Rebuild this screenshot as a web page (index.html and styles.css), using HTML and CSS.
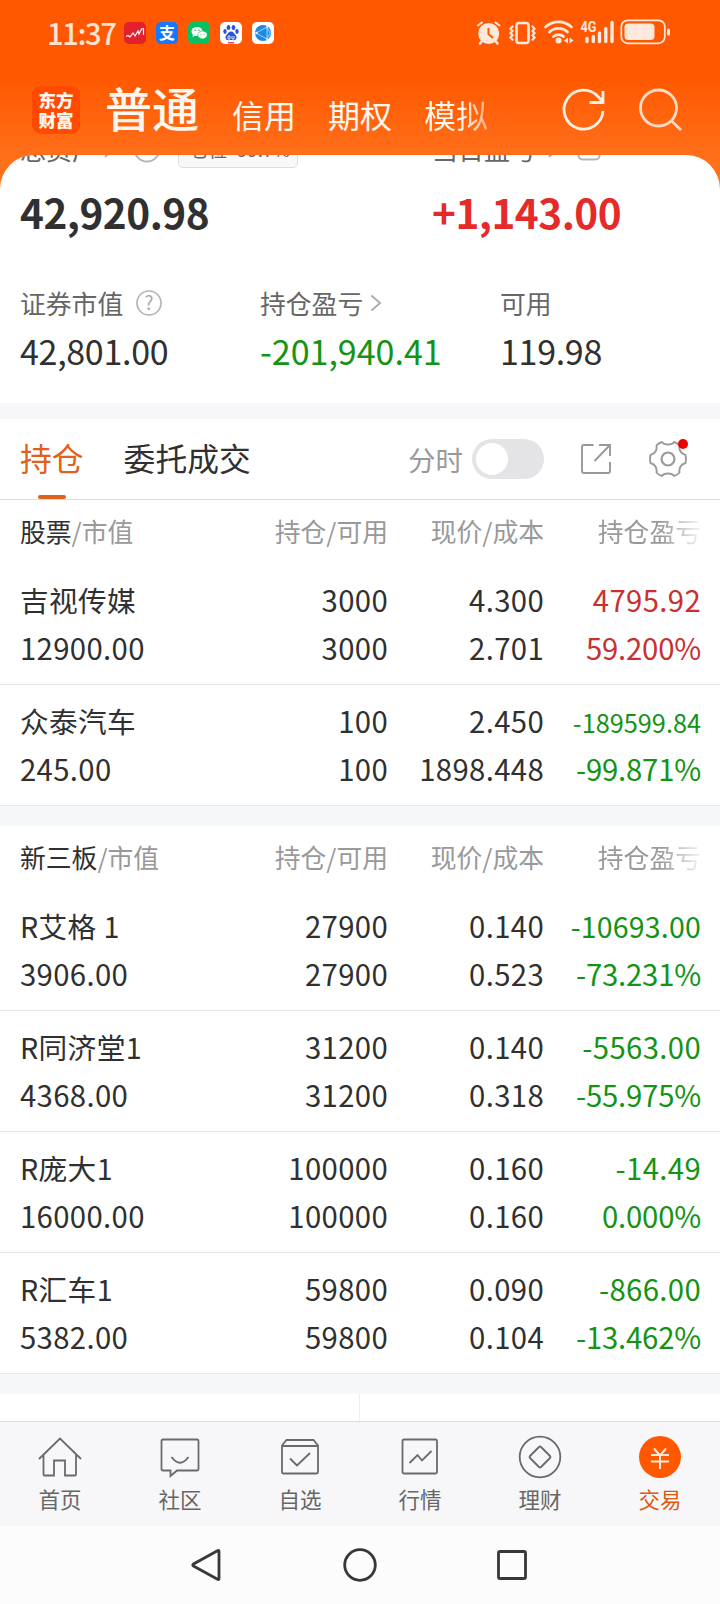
FILE: index.html
```html
<!DOCTYPE html>
<html lang="zh-CN">
<head>
    <meta charset="UTF-8">
    <title>交易</title>
    <link rel="stylesheet" href="styles.css">
</head>
<body>
    <header class="header">
        <div class="status-bar">
            <span class="time">11:37</span>
            <div class="apps">
                <svg width="22" height="22" viewBox="0 0 22 22"><rect width="22" height="22" rx="5" fill="#e3202c"/><path d="M2 14.500l2-1 2 1.500 3-4 2 3 3-5 1 3 2.500-5 2-.5v6.500" fill="none" stroke="#fff" stroke-width="1.200"/></svg>
                <svg width="22" height="22" viewBox="0 0 22 22"><rect width="22" height="22" rx="5" fill="#1677ff"/><text x="11" y="17" text-anchor="middle" class="zhi">支</text></svg>
                <svg width="22" height="22" viewBox="0 0 22 22"><rect width="22" height="22" rx="5" fill="#07c160"/><ellipse cx="9" cy="9.500" rx="5.500" ry="4.600" fill="#fff"/><path d="M5 12l-.5 3 3-1.500z" fill="#fff"/><ellipse cx="14.500" cy="13" rx="4.700" ry="3.900" fill="#fff" stroke="#07c160" stroke-width=".6"/><g fill="#07c160"><circle cx="7.200" cy="8.300" r=".8"/><circle cx="11" cy="8.300" r=".8"/><circle cx="13" cy="12" r=".6"/><circle cx="16" cy="12" r=".6"/></g></svg>
                <svg width="22" height="22" viewBox="0 0 22 22"><rect width="22" height="22" rx="5" fill="#fff"/><g fill="#2a55d8"><ellipse cx="8.500" cy="5.500" rx="1.900" ry="2.600"/><ellipse cx="13.500" cy="5.500" rx="1.900" ry="2.600"/><ellipse cx="5" cy="9.500" rx="1.700" ry="2.400"/><ellipse cx="17" cy="9.500" rx="1.700" ry="2.400"/><path d="M11 9.500c2.500 0 3 2 4.500 3.500 2 2 1 5.500-2 5.200-1.500-.2-3.500-.2-5 0-3 .3-4-3.200-2-5.200C8 11.500 8.500 9.500 11 9.500z"/></g><path d="M8 14h2v3H8zM12 14v3h2v-3" fill="none" stroke="#fff" stroke-width=".8"/><path d="M8 20.800h6" stroke="#d93a5c" stroke-width="1.400"/></svg>
                <svg width="22" height="22" viewBox="0 0 22 22"><rect width="22" height="22" rx="5" fill="#fff"/><circle cx="11" cy="11" r="8" fill="#1e88e5"/><path d="M4 11l11-6 3 6-3 6zM15 5v12" fill="none" stroke="#8fdcff" stroke-width="1"/><g fill="#d8f4ff"><circle cx="4.500" cy="11" r="1.300"/><circle cx="15" cy="5" r="1"/><circle cx="15" cy="17" r="1"/></g></svg>
            </div>
            <svg class="signals" width="194" height="28" viewBox="476 19 194 28">
                <g fill="none" stroke="#ffe9dd" stroke-linecap="round">
                    <path d="M478 25.500l4-3M499.500 25.500l-4-3" stroke-width="2"/>
                    <path d="M482 41l-2 2.500M495.500 41l2 2.500" stroke-width="2.600"/>
                    <rect x="516.500" y="23" width="12" height="20" rx="2.500" stroke-width="2.600"/>
                    <path d="M512.500 26.500l-2 2.200 2 2.200-2 2.200 2 2.200-2 2.200 2 2.200M532.500 26.500l2 2.200-2 2.200 2 2.200-2 2.200 2 2.200-2 2.200" stroke-width="2.200"/>
                    <path d="M545.500 27a19 19 0 0 1 26 0M549.500 32a13 13 0 0 1 18 0M553.500 36.500a7.500 7.500 0 0 1 10 0" stroke-width="2.700"/>
                    <path d="M587 38.500v3M593.300 36.500v5M599.500 33v8.500M605.800 28.500v13M612 22.500v19" stroke-width="3.400"/>
                    <rect x="621.300" y="20.300" width="43.500" height="23" rx="6.500" stroke-width="1.700"/>
                    <path d="M668.500 30v4" stroke-width="3"/>
                </g>
                <g fill="#ffe9dd">
                    <circle cx="488.700" cy="33.500" r="10.500"/>
                    <circle cx="558.500" cy="40.500" r="3"/>
                    <path d="M568 37.500v6l-4-3zM569.500 37.500v6l4-3z"/>
                    <rect x="624.500" y="23.500" width="30" height="16.600" rx="4"/>
                    <text x="580.500" y="32" textLength="16" lengthAdjust="spacingAndGlyphs" class="net">4G</text>
                </g>
                <path d="M488.500 28v6l4.500 4" fill="none" stroke="#ff5800" stroke-width="2"/>
            </svg>
        </div>
        <nav class="top-nav">
            <div class="logo">东方<br>财富</div>
            <span class="nav-item current">普通</span>
            <span class="nav-item">信用</span>
            <span class="nav-item">期权</span>
            <span class="nav-item fade">模拟</span>
            <svg class="refresh" width="44" height="44" viewBox="0 0 44 44" fill="none" stroke="#fff0e6" stroke-width="2.800"><path d="M41 23a19.500 19.500 0 1 1-5-14.500l4 4.500M41 3v11.500H27.500"/></svg>
            <svg class="search" width="44" height="44" viewBox="0 0 44 44" fill="none" stroke="#ffdcc4" stroke-width="2.800"><circle cx="20.500" cy="20" r="18"/><path d="M33 32.500l10 9.500"/></svg>
        </nav>
    </header>

    <main class="panel">
        <section class="assets">
            <div class="asset-head">
                <div class="asset-total">
                    <span>总资产</span>
                    <svg class="chevron" width="10" height="18" viewBox="0 0 10 18"><path d="M1 1l8 8-8 8"/></svg>
                    <svg class="ring" width="28" height="28" viewBox="0 0 28 28"><circle cx="14" cy="14" r="12.500"/></svg>
                    <span class="badge">仓位 99.7%</span>
                </div>
                <div class="asset-day">
                    <span>当日盈亏</span>
                    <svg class="chevron" width="10" height="18" viewBox="0 0 10 18"><path d="M1 1l8 8-8 8"/></svg>
                    <svg class="ring" width="24" height="24" viewBox="0 0 24 24"><rect x="1.500" y="1.500" width="21" height="21" rx="4"/></svg>
                </div>
            </div>
            <div class="asset-big">
                <div>42,920.98</div>
                <div class="red">+1,143.00</div>
            </div>
            <div class="asset-list">
                <div>
                    <div class="label">证券市值 <svg class="help" width="26" height="26" viewBox="0 0 26 26"><circle cx="13" cy="13" r="12" fill="none" stroke="#b5b5b5" stroke-width="1.700"/><text x="13" y="19.500" text-anchor="middle">?</text></svg></div>
                    <div class="value">42,801.00</div>
                </div>
                <div>
                    <div class="label">持仓盈亏 <svg class="chevron" width="12" height="18" viewBox="0 0 12 18"><path d="M1.500 1.500l8.500 7.500-8.500 7.500"/></svg></div>
                    <div class="value green">-201,940.41</div>
                </div>
                <div>
                    <div class="label">可用</div>
                    <div class="value">119.98</div>
                </div>
            </div>
        </section>

        <div class="tabs">
            <span class="tab active">持仓</span>
            <span class="tab">委托成交</span>
            <span class="switch-label">分时</span>
            <span class="switch"></span>
            <svg class="share" width="32" height="32" viewBox="0 0 32 32" fill="none" stroke="#999" stroke-width="1.900"><path d="M13.500 2H4a2 2 0 0 0-2 2v24a2 2 0 0 0 2 2h24a2 2 0 0 0 2-2V19M19 2h11v11M29.500 2.500l-15 15.500"/></svg>
            <span class="setting">
                <svg width="38" height="38" viewBox="-19 -19 38 38" fill="none" stroke="#999" stroke-width="1.900" stroke-linejoin="round"><path d="M-6-17Q-4.500-14.500 0-14.500T6-17Q9.500-16 11.500-13.500Q11-10 12.500-7.500T17.500-4Q18.300 0 17.500 4Q14 5 12.500 7.500T11.500 13.500Q9.500 16 6 17Q4.500 14.500 0 14.500T-6 17Q-9.500 16-11.500 13.500Q-11 10-12.500 7.500T-17.500 4Q-18.300 0-17.500-4Q-14-5-12.500-7.500T-11.500-13.500Q-9.500-16-6-17Z"/><circle r="6.500" stroke-width="2.200"/></svg>
                <i class="dot"></i>
            </span>
        </div>

        <section class="stocks">
            <div class="row title">
                <span><b>股票</b>/市值</span><span>持仓/可用</span><span>现价/成本</span><span class="fade-out">持仓盈亏</span>
            </div>
            <div class="row">
                <span><em>吉视传媒</em><br>12900.00</span>
                <span>3000<br>3000</span>
                <span>4.300<br>2.701</span>
                <span class="up">4795.92<br><u>59.200%</u></span>
            </div>
            <div class="row">
                <span><em>众泰汽车</em><br>245.00</span>
                <span>100<br>100</span>
                <span>2.450<br>1898.448</span>
                <span class="green"><small>-189599.84</small><br><u>-99.871%</u></span>
            </div>
        </section>

        <section class="stocks">
            <div class="row title">
                <span><b>新三板</b>/市值</span><span>持仓/可用</span><span>现价/成本</span><span class="fade-out">持仓盈亏</span>
            </div>
            <div class="row">
                <span><em>R艾格 1</em><br>3906.00</span>
                <span>27900<br>27900</span>
                <span>0.140<br>0.523</span>
                <span class="green"><small class="mid">-10693.00</small><br><u>-73.231%</u></span>
            </div>
            <div class="row">
                <span><em>R同济堂1</em><br>4368.00</span>
                <span>31200<br>31200</span>
                <span>0.140<br>0.318</span>
                <span class="green">-5563.00<br><u>-55.975%</u></span>
            </div>
            <div class="row">
                <span><em>R庞大1</em><br>16000.00</span>
                <span>100000<br>100000</span>
                <span>0.160<br>0.160</span>
                <span class="green">-14.49<br><u>0.000%</u></span>
            </div>
            <div class="row">
                <span><em>R汇车1</em><br>5382.00</span>
                <span>59800<br>59800</span>
                <span>0.090<br>0.104</span>
                <span class="green">-866.00<br><u>-13.462%</u></span>
            </div>
        </section>

        <div class="more"></div>
    </main>

    <footer class="tab-bar">
        <div class="tab-item">
            <svg width="44" height="44" viewBox="0 0 44 44"><path d="M1 24L22 3.500 43 24M5.500 20v19.500q0 1 1 1h9.500V25.500h11v15h10q1 0 1-1V20"/></svg>
            首页
        </div>
        <div class="tab-item">
            <svg width="44" height="44" viewBox="0 0 44 44"><path d="M5 4.500h34q1.500 0 1.500 1.500v28q0 1.500-1.500 1.500H19L12.500 41v-5.500H5q-1.500 0-1.500-1.500V6q0-1.500 1.500-1.500zM13.500 22q8.500 11.500 17 0"/></svg>
            社区
        </div>
        <div class="tab-item">
            <svg width="44" height="44" viewBox="0 0 44 44"><path d="M4 10.500L8.500 5h27L40 10.500V37q0 1.500-1.500 1.500h-33Q4 38.500 4 37zM4 11h36M12 23.500l7 7L32 18"/></svg>
            自选
        </div>
        <div class="tab-item">
            <svg width="44" height="44" viewBox="0 0 44 44"><rect x="4.500" y="4.500" width="34.500" height="34" rx="1.500"/><path d="M11.500 28l8-8 4.500 5.500L33.500 16"/></svg>
            行情
        </div>
        <div class="tab-item">
            <svg width="44" height="44" viewBox="0 0 44 44"><circle cx="22" cy="22" r="20.300"/><path d="M21 12q1-1 2 0l9 9q1 1 0 2l-9 9q-1 1-2 0l-9-9q-1-1 0-2z"/></svg>
            理财
        </div>
        <div class="tab-item selected">
            <svg width="44" height="44" viewBox="0 0 44 44"><circle class="coin" cx="22" cy="22" r="21"/><path class="yen" d="M16 13.500l6 7 6-7M22 20v14M13 20h18M13 26.500h18"/></svg>
            交易
        </div>
    </footer>

    <div class="sys-nav">
        <svg width="36" height="36" viewBox="0 0 36 36"><path d="M29 4.500v27q0 1.500-1.500.8L3.500 19q-1.500-1 0-2L27.500 3.700q1.500-.8 1.500.8z"/></svg>
        <svg width="36" height="36" viewBox="0 0 36 36"><circle cx="18" cy="18" r="15.300"/></svg>
        <svg width="36" height="36" viewBox="0 0 36 36"><rect x="4.500" y="4.500" width="27" height="27" rx="1.500"/></svg>
    </div>
</body>
</html>
```

FILE: styles.css
```css
* {
    box-sizing: border-box;
}
body {
    margin: 0;
    width: 720px;
    height: 1604px;
    overflow: hidden;
    display: flex;
    flex-direction: column;
    font-family: "Noto Sans CJK SC", sans-serif;
    color: #303030;
    background: #fff;
}
svg {
    display: block;
    flex: none;
}
b, em, small, i, u {
    font-style: normal;
    font-weight: normal;
    text-decoration: none;
}

/* header */
.header {
    height: 195px;
    flex: none;
    background: linear-gradient(#ff5800 75px, #ff701b 160px);
}
.status-bar {
    height: 66px;
    padding: 0 50px 0 47px;
    display: flex;
    align-items: center;
}
.time {
    width: 77px;
    margin-top: -3px;
    font-size: 29px;
    font-weight: 500;
    letter-spacing: -1.2px;
    line-height: 44px;
    color: #ffe4d4;
}
.apps {
    display: flex;
    gap: 10px;
}
.zhi {
    font-size: 16px;
    font-weight: bold;
    fill: #fff;
}
.net {
    font-family: Roboto, sans-serif;
    font-size: 14px;
    font-weight: bold;
}
.signals {
    margin-left: auto;
}
.top-nav {
    height: 89px;
    padding-left: 32px;
    display: flex;
    color: #fff8f0;
}
.logo {
    width: 48px;
    height: 48px;
    margin: 20px 25px 0 0;
    padding-top: 4px;
    border-radius: 9px;
    background: #ff4a00;
    font-size: 17.5px;
    font-weight: 900;
    line-height: 19.5px;
    text-align: center;
}
.nav-item {
    width: 64px;
    height: 42px;
    margin: 27px 32px 0 0;
    font-size: 32px;
    line-height: 42px;
    white-space: nowrap;
}
.nav-item.current {
    width: 95px;
    height: 58px;
    margin-top: 12px;
    font-size: 47px;
    font-weight: 500;
    line-height: 58px;
}
.nav-item.fade {
    margin-right: 74px;
    color: transparent;
    background: linear-gradient(90deg, #fff8f0 60%, #ffab7a);
    -webkit-background-clip: text;
    background-clip: text;
}
.refresh {
    margin: 22px 32px 0 0;
}
.search {
    margin-top: 22px;
}

/* assets */
.panel {
    height: 1266px;
    margin-top: -40px;
    flex: none;
    overflow: hidden;
    border-radius: 34px 34px 0 0;
    background: #fff;
}
.assets {
    height: 288px;
    margin-top: -24px;
    padding-left: 20px;
    border-bottom: 16px solid #f7f7fa;
}
.asset-head {
    display: flex;
    height: 36px;
    font-size: 26px;
    line-height: 36px;
    color: #666;
}
.asset-total, .asset-day {
    width: 412px;
    flex: none;
    display: flex;
    align-items: center;
}
.asset-day {
    width: auto;
}
.chevron {
    fill: none;
    stroke: #aaa;
    stroke-width: 1.8;
}
.asset-head .chevron {
    margin: 0 19px 0 6px;
}
.asset-day .chevron {
    margin: 0 19px 0 12px;
}
.ring {
    fill: none;
    stroke: #b5b5b5;
    stroke-width: 2;
}
.badge {
    width: 120px;
    height: 38px;
    margin-left: 17px;
    padding-left: 11px;
    border: 1px solid #ddd;
    border-radius: 5px;
    background: #f8f8fa;
    font-size: 18.5px;
    line-height: 36px;
    word-spacing: 6px;
    white-space: nowrap;
}
.asset-big {
    display: flex;
    margin-top: 13px;
    font-size: 40.5px;
    font-weight: bold;
    line-height: 64px;
    letter-spacing: -0.5px;
}
.asset-big div {
    width: 412px;
    flex: none;
}
.asset-list {
    display: flex;
    margin-top: 37px;
}
.asset-list > div {
    width: 240px;
    flex: none;
}
.label {
    display: flex;
    align-items: center;
    height: 42px;
    font-size: 25.8px;
    color: #666;
}
.help {
    margin: 2px 0 0 13px;
}
.help text {
    font-size: 19px;
    fill: #aaa;
}
.label .chevron {
    margin: 2px 0 0 7px;
}
.value {
    font-size: 34px;
    line-height: 55px;
    letter-spacing: -0.3px;
}
.value.green {
    letter-spacing: 0;
}
.red {
    color: #e52a2a;
}
.up {
    color: #c9302f;
}
.green {
    color: #149314;
}

/* tabs */
.tabs {
    height: 81px;
    padding-left: 20px;
    display: flex;
    align-items: center;
    border-bottom: 1px solid #dcdcdc;
    font-size: 31.8px;
}
.tab {
    height: 80px;
    margin-right: 40px;
    line-height: 76px;
}
.tab.active {
    color: #e0601c;
}
.tab.active::after {
    content: "";
    display: block;
    width: 28px;
    height: 4px;
    margin: 0 auto;
    border-radius: 2px;
    background: #e0601c;
}
.switch-label {
    margin: -1px 9px 0 auto;
    font-size: 27.5px;
    color: #999;
}
.switch {
    width: 72px;
    height: 40px;
    padding: 4px;
    border-radius: 20px;
    background: #e4e4e6;
}
.switch::after {
    content: "";
    display: block;
    width: 32px;
    height: 32px;
    border-radius: 50%;
    background: #fff;
}
.share {
    margin: 0 37px 0 36px;
}
.setting {
    position: relative;
    margin-right: 33px;
}
.dot {
    position: absolute;
    top: -1px;
    right: -1px;
    width: 10px;
    height: 10px;
    border-radius: 50%;
    background: #f00000;
}

/* stock list */
.stocks {
    border-bottom: 20px solid #f6f7f9;
}
.row {
    display: grid;
    grid-template-columns: 211px 157px 156px 157px;
    height: 121px;
    padding: 11px 0 0 20px;
    border-bottom: 1px solid #e9e9eb;
    font-size: 29.3px;
    line-height: 48px;
    letter-spacing: 0.35px;
    text-align: right;
    white-space: nowrap;
}
.row span:first-child {
    text-align: left;
}
.row em {
    font-size: 28.7px;
    line-height: 1;
}
.row small {
    font-size: 25.3px;
    line-height: 1;
    letter-spacing: 0;
}
.row small.mid {
    font-size: 28.5px;
    letter-spacing: 0.2px;
}
.row u {
    letter-spacing: -0.2px;
}
.row.title {
    height: 64px;
    padding-top: 7px;
    border-bottom: 0;
    font-size: 25.8px;
    letter-spacing: 0;
    color: #999;
}
.title b {
    color: #303030;
}
.fade-out {
    -webkit-mask-image: linear-gradient(90deg, #000 74%, rgba(0, 0, 0, 0.1));
    mask-image: linear-gradient(90deg, #000 74%, rgba(0, 0, 0, 0.1));
}
.more {
    width: 360px;
    height: 40px;
    border-right: 1px solid #eee;
}

/* bottom bar */
.tab-bar {
    display: flex;
    height: 105px;
    flex: none;
    border-top: 1px solid #dcdcdc;
    background: #f7f7fa;
}
.tab-item {
    width: 120px;
    padding-top: 13px;
    display: flex;
    flex-direction: column;
    align-items: center;
    font-size: 21.5px;
    line-height: 40px;
    color: #666;
}
.tab-item svg {
    fill: none;
    stroke: #6a6a6a;
    stroke-width: 1.8;
}
.tab-item.selected {
    color: #e2560c;
}
.tab-item .coin {
    fill: #ff5800;
    stroke: none;
}
.tab-item .yen {
    stroke: #ffeadd;
    stroke-width: 2;
}
.sys-nav {
    height: 78px;
    display: flex;
    justify-content: center;
    align-items: center;
    gap: 116px;
    background: #fcfcfc;
}
.sys-nav svg {
    fill: none;
    stroke: #383838;
    stroke-width: 2.8;
}
```
